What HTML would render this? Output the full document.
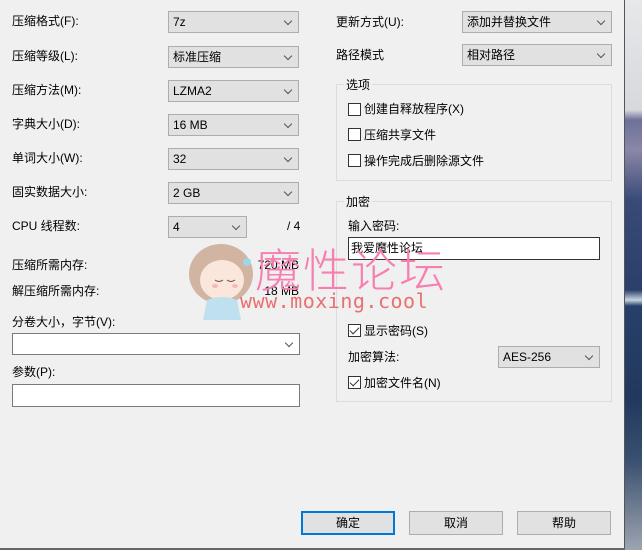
<!DOCTYPE html>
<html><head><meta charset="utf-8"><style>
*{box-sizing:border-box;margin:0;padding:0}
body{width:642px;height:550px;overflow:hidden;background:#f0f0f0;font-family:"Liberation Sans","Noto Sans CJK SC",sans-serif;font-size:12px;color:#000;position:relative}
.a{position:absolute;white-space:nowrap;line-height:14px}
.cb{position:absolute;height:22px;background:#e1e1e1;border:1px solid #adadad;padding-left:4px;line-height:20px}
.cb:after{content:"";position:absolute;right:7px;top:6px;width:5px;height:5px;border-right:1px solid #555;border-bottom:1px solid #555;transform:rotate(45deg)}
.tx{position:absolute;background:#fff;border:1px solid #7a7a7a}
.grp{position:absolute;border:1px solid #dcdcdc}
.ck{position:absolute;width:13px;height:13px;border:1px solid #333;background:#fff}
.ck.on:after{content:"";position:absolute;left:3px;top:0px;width:4px;height:8px;border-right:1.5px solid #333;border-bottom:1.5px solid #333;transform:rotate(45deg)}
.bt{position:absolute;height:24px;width:94px;background:#e1e1e1;border:1px solid #adadad;text-align:center;line-height:22px}
</style></head><body>
<div style="position:absolute;left:624px;top:0;width:18px;height:550px;background:linear-gradient(#e6e8ea 0,#d6d8dc 110px,#6d7199 120px,#8a87a8 150px,#3a4a78 200px,#2a3f6a 290px,#c8d4e0 300px,#27406a 306px,#22385e 400px,#3a5070 460px,#9ca4b0 550px)"></div>
<div style="position:absolute;left:624px;top:0;width:1px;height:549px;background:#555"></div>
<div style="position:absolute;left:0;top:548px;width:625px;height:2px;background:#666"></div>

<div class="a" style="left:12px;top:14px">压缩格式(F):</div><div class="cb" style="left:168px;top:11px;width:131px">7z</div>
<div class="a" style="left:12px;top:49px">压缩等级(L):</div><div class="cb" style="left:168px;top:46px;width:131px">标准压缩</div>
<div class="a" style="left:12px;top:83px">压缩方法(M):</div><div class="cb" style="left:168px;top:80px;width:131px">LZMA2</div>
<div class="a" style="left:12px;top:117px">字典大小(D):</div><div class="cb" style="left:168px;top:114px;width:131px">16 MB</div>
<div class="a" style="left:12px;top:151px">单词大小(W):</div><div class="cb" style="left:168px;top:148px;width:131px">32</div>
<div class="a" style="left:12px;top:185px">固实数据大小:</div><div class="cb" style="left:168px;top:182px;width:131px">2 GB</div>
<div class="a" style="left:12px;top:219px">CPU 线程数:</div><div class="cb" style="left:168px;top:216px;width:79px">4</div>
<div class="a" style="left:287px;top:219px">/ 4</div>
<div class="a" style="left:12px;top:258px">压缩所需内存:</div><div class="a" style="left:240px;top:258px;width:59px;text-align:right">720 MB</div>
<div class="a" style="left:12px;top:284px">解压缩所需内存:</div><div class="a" style="left:240px;top:284px;width:59px;text-align:right">18 MB</div>
<div class="a" style="left:12px;top:315px">分卷大小，字节(V):</div><div class="cb" style="left:12px;top:333px;width:288px;background:#fff;border-color:#7a7a7a"></div>
<div class="a" style="left:12px;top:365px">参数(P):</div><div class="tx" style="left:12px;top:384px;width:288px;height:23px"></div>

<div class="a" style="left:336px;top:15px">更新方式(U):</div><div class="cb" style="left:462px;top:11px;width:150px">添加并替换文件</div>
<div class="a" style="left:336px;top:48px">路径模式</div><div class="cb" style="left:462px;top:44px;width:150px">相对路径</div>
<div class="grp" style="left:336px;top:84px;width:276px;height:97px"></div>
<div class="a" style="left:344px;top:78px;background:#f0f0f0;padding:0 2px">选项</div>
<div class="ck" style="left:348px;top:103px"></div><div class="a" style="left:364px;top:102px">创建自释放程序(X)</div>
<div class="ck" style="left:348px;top:128px"></div><div class="a" style="left:364px;top:128px">压缩共享文件</div>
<div class="ck" style="left:348px;top:154px"></div><div class="a" style="left:364px;top:154px">操作完成后删除源文件</div>
<div class="grp" style="left:336px;top:201px;width:276px;height:201px"></div>
<div class="a" style="left:344px;top:195px;background:#f0f0f0;padding:0 2px">加密</div>
<div class="a" style="left:348px;top:219px">输入密码:</div>
<div class="tx" style="left:348px;top:237px;width:252px;height:23px;border-color:#333;padding:3px 2px;line-height:14px">我爱魔性论坛</div>
<div class="ck on" style="left:348px;top:324px"></div><div class="a" style="left:364px;top:324px">显示密码(S)</div>
<div class="a" style="left:348px;top:350px">加密算法:</div><div class="cb" style="left:498px;top:346px;width:102px">AES-256</div>
<div class="ck on" style="left:348px;top:376px"></div><div class="a" style="left:364px;top:376px">加密文件名(N)</div>

<div class="bt" style="left:301px;top:511px;border:2px solid #0078d7;line-height:20px">确定</div>
<div class="bt" style="left:409px;top:511px">取消</div>
<div class="bt" style="left:517px;top:511px">帮助</div>

<svg style="position:absolute;left:185px;top:240px" width="80" height="85">
<ellipse cx="36" cy="34" rx="32" ry="30" fill="#c9a58f" opacity=".8"/>
<ellipse cx="37" cy="40" rx="22" ry="20" fill="#fbe6dc"/>
<path d="M30 40q4 3 8 0M42 40q4 3 8 0" stroke="#6b4a3a" fill="none"/>
<ellipse cx="30" cy="46" rx="3" ry="2" fill="#f5b8c0"/><ellipse cx="50" cy="46" rx="3" ry="2" fill="#f5b8c0"/>
<path d="M22 60q15-6 30 0l4 20h-38z" fill="#bfe0ee"/>
<circle cx="62" cy="22" r="4" fill="#9fd6e6"/>
</svg>
<div class="a" style="left:255px;top:244px;font-size:46px;line-height:48px;color:#f77eb0;letter-spacing:2px;font-family:'Noto Sans CJK SC',sans-serif;font-weight:300">魔性论坛</div>
<div class="a" style="left:240px;top:289px;font-size:20px;line-height:24px;color:#e85a5a;letter-spacing:0.5px;font-family:'DejaVu Sans Mono',monospace;opacity:.85">www.moxing.cool</div>
</body></html>
